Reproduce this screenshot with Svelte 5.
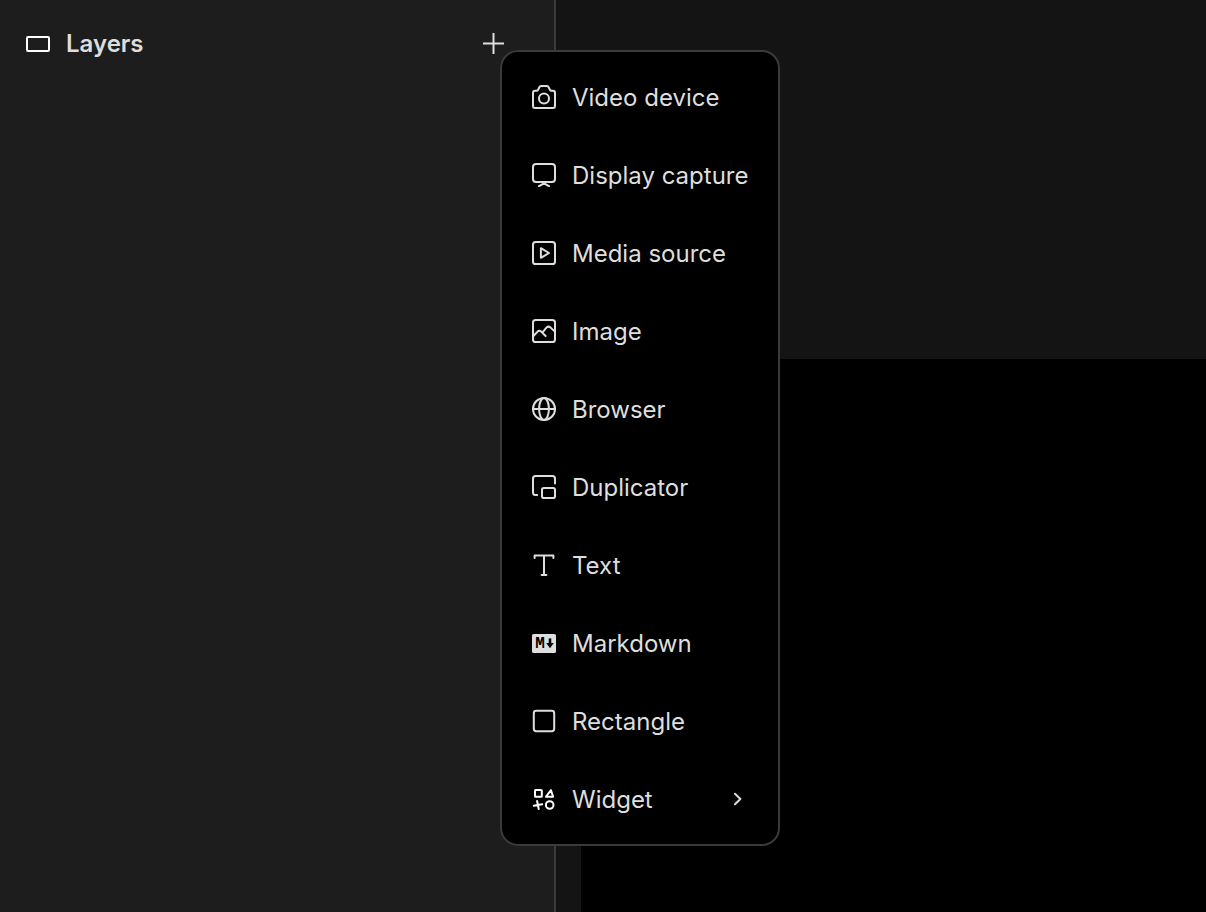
<script>
  let open = $state(true);

  const items = [
    { icon: 'camera', label: 'Video device' },
    { icon: 'display', label: 'Display capture' },
    { icon: 'media', label: 'Media source' },
    { icon: 'image', label: 'Image' },
    { icon: 'globe', label: 'Browser' },
    { icon: 'duplicate', label: 'Duplicator' },
    { icon: 'text', label: 'Text' },
    { icon: 'markdown', label: 'Markdown' },
    { icon: 'rectangle', label: 'Rectangle' },
    { icon: 'widget', label: 'Widget', submenu: true }
  ];

  function toggle() {
    open = !open;
  }
</script>

<div class="app">
  <aside class="sidebar">
    <header class="header">
      <svg class="icon layer-icon" viewBox="0 0 24 24">
        <rect x="1" y="5" width="22" height="14" rx="1" />
      </svg>
      <h2>Layers</h2>
      <div class="add">
        <button class="add-button" aria-label="Add layer" aria-expanded={open} onclick={toggle}>
          <svg viewBox="0 0 21 21"><path d="M10.5 0v21M0 10.5h21" /></svg>
        </button>
        {#if open}
          <div class="menu" role="menu">
            {#each items as item}
              <button class="item" role="menuitem">
                <svg class="icon" viewBox="0 0 24 24">
                  {#if item.icon === 'camera'}
                    <path d="M3 5.8H4.6Q5.6 5.8 6.1 4.8L7.3 2.3Q7.9 1 9.2 1H14.8Q16.1 1 16.7 2.3L17.9 4.8Q18.4 5.8 19.4 5.8H21Q23 5.8 23 7.8V21Q23 23 21 23H3Q1 23 1 21V7.8Q1 5.8 3 5.8Z" />
                    <circle cx="12" cy="13.5" r="5" />
                  {:else if item.icon === 'display'}
                    <rect x="1" y="1" width="22" height="18" rx="3" />
                    <path d="M7 23.2l5-2.8 5 2.8" />
                  {:else if item.icon === 'media'}
                    <rect x="1" y="1" width="22" height="22" rx="2.6" />
                    <path d="M8.9 7.2v9.6L17 12z" />
                  {:else if item.icon === 'image'}
                    <rect x="1" y="1" width="22" height="22" rx="2.6" />
                    <path d="M1.2 17.2l4.4-4.6q1.8-1.6 3.6 0l4.4 4.4M10.6 13.4l4-5q1.9-1.6 3.8 0l4.4 4.2" />
                  {:else if item.icon === 'globe'}
                    <circle cx="12" cy="12" r="11" />
                    <ellipse cx="12" cy="12" rx="4.9" ry="11" />
                    <path d="M1 12h22" />
                  {:else if item.icon === 'duplicate'}
                    <path d="M5.2 20H3.5Q1 20 1 17.5V3.5Q1 1 3.5 1H20.5Q23 1 23 3.5V8.6" />
                    <rect x="10" y="13" width="13" height="10" rx="1.8" />
                  {:else if item.icon === 'text'}
                    <path d="M2.6 5V2.4h18.8V5M12 2.4v19.4M9.6 22h4.8" />
                  {:else if item.icon === 'markdown'}
                    <rect class="solid" y="3" width="24" height="19" rx="1.6" />
                    <text class="mark" x="8" y="17" text-anchor="middle">M</text>
                    <path class="cut" d="M18 7.4v6" />
                    <path class="tip" d="M14.2 12h7.6L18 17.2z" />
                  {:else if item.icon === 'rectangle'}
                    <rect x="1.8" y="1.8" width="20.4" height="20.4" rx="2.4" />
                  {:else}
                    <g class="bright">
                      <rect x="3" y="3" width="6.8" height="6.8" rx=".6" />
                      <path d="M18.9 3.1l-5 6.7h7.2zM1.8 18.8l8.4-1.6M5.1 14l1.6 8" />
                      <circle cx="17.7" cy="18" r="3.8" />
                    </g>
                  {/if}
                </svg>
                <span>{item.label}</span>
                {#if item.submenu}
                  <svg class="chevron" viewBox="0 0 12 14"><path d="M3 1.8L8.4 7 3 12.2" /></svg>
                {/if}
              </button>
            {/each}
          </div>
        {/if}
      </div>
    </header>
  </aside>
  <main class="stage">
    <div class="canvas"></div>
  </main>
</div>

<style>
:global(body) {
  margin: 0;
  background: #141414;
}
.app {
  display: grid;
  grid-template-columns: 556px 1fr;
  min-height: 100vh;
  color: #dedede;
  font-family: Inter, sans-serif;
  font-size: 24px;
  line-height: 31px;
}
.sidebar {
  background: #1d1d1d;
  border-right: 2px solid #3a3a3a;
}
.header {
  display: flex;
  align-items: center;
  gap: 16px;
  height: 87px;
  padding: 0 50px 0 26px;
}
h2 {
  flex: 1;
  margin: 0;
  font-size: 24px;
  font-weight: 600;
  line-height: 32px;
}
svg {
  flex: none;
  fill: none;
  stroke: currentColor;
  stroke-width: 2;
  stroke-linecap: round;
  stroke-linejoin: round;
}
.icon {
  width: 24px;
  height: 24px;
}
.layer-icon {
  color: #fff;
}
.add {
  position: relative;
}
button {
  border: 0;
  background: none;
  color: inherit;
  font: inherit;
  cursor: pointer;
}
.add-button {
  display: block;
  padding: 0;
}
.add-button svg {
  display: block;
  width: 21px;
  height: 21px;
  stroke-linecap: butt;
}
.menu {
  position: absolute;
  top: 17px;
  left: 17px;
  z-index: 1;
  box-sizing: border-box;
  width: 280px;
  padding: 6px 0;
  border: 2px solid #3a3a3a;
  border-radius: 18px;
  background: #000;
}
.item {
  display: flex;
  align-items: center;
  gap: 16px;
  width: 100%;
  height: 78px;
  padding: 0 34px 0 30px;
  text-align: left;
  white-space: nowrap;
}
.item:hover {
  background: #1d1d1d;
}
.solid {
  fill: currentColor;
  stroke: none;
}
.mark {
  fill: #000;
  stroke: none;
  font-family: "Liberation Mono", monospace;
  font-size: 16px;
  font-weight: 700;
}
.cut {
  stroke: #000;
  stroke-width: 2.6;
  stroke-linecap: butt;
}
.tip {
  fill: #000;
  stroke: none;
}
.bright {
  stroke: #fff;
}
.chevron {
  width: 12px;
  height: 14px;
  margin-left: auto;
}
.stage {
  display: flex;
  padding: 359px 0 0 25px;
  background: #141414;
}
.canvas {
  flex: 1;
  background: #000;
}
</style>
